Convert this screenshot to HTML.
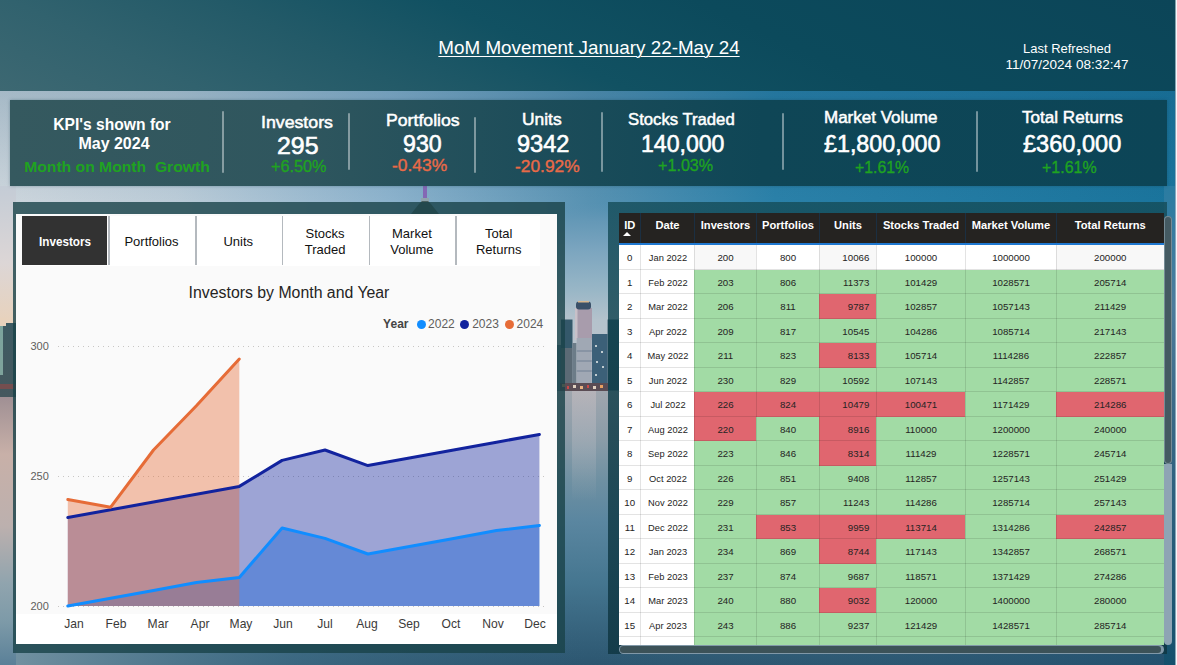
<!DOCTYPE html>
<html lang="en"><head><meta charset="utf-8"><title>MoM Movement January 22-May 24</title>
<style>
html,body{margin:0;padding:0}
body{width:1177px;height:665px;overflow:hidden;position:relative;background:#f4f6fa;font-family:"Liberation Sans",sans-serif}
.t{position:absolute;white-space:pre;margin:0;padding:0}
.a{position:absolute}
#wrap{position:absolute;left:0;top:0;width:1175px;height:665px;overflow:hidden}
</style></head><body><div id="wrap">

<svg class="a" style="left:0;top:0" width="1175" height="665" viewBox="0 0 1175 665">
<defs>
<linearGradient id="sky" x1="0" y1="0" x2="1" y2="0">
<stop offset="0" stop-color="#ccd5dc"/><stop offset="0.15" stop-color="#bacbd7"/><stop offset="0.33" stop-color="#8cb2cc"/><stop offset="0.5" stop-color="#5892b2"/><stop offset="0.66" stop-color="#2a80a8"/><stop offset="1" stop-color="#1a749c"/>
</linearGradient>
<linearGradient id="topd" x1="0" y1="0" x2="0" y2="1"><stop offset="0.4" stop-color="#0c4a70" stop-opacity="0.22"/><stop offset="1" stop-color="#0c4a70" stop-opacity="0"/></linearGradient>
<linearGradient id="rstrip" x1="0" y1="0" x2="0" y2="1"><stop offset="0" stop-color="#2a7ca2"/><stop offset="0.25" stop-color="#4c7c9c"/><stop offset="0.45" stop-color="#3a6a88"/><stop offset="1" stop-color="#14506c"/></linearGradient>
<linearGradient id="hz" x1="0" y1="0" x2="0" y2="1">
<stop offset="0" stop-color="#5c94b4" stop-opacity="0"/><stop offset="0.1" stop-color="#6699b7" stop-opacity="0.9"/><stop offset="0.25" stop-color="#7ba5bf"/><stop offset="0.46" stop-color="#98b6c6"/><stop offset="0.62" stop-color="#b4c2cc"/><stop offset="1" stop-color="#c4c4cc"/>
</linearGradient>
<linearGradient id="refl" x1="0" y1="0" x2="0" y2="1"><stop offset="0" stop-color="#c4bcc0" stop-opacity="0.6"/><stop offset="0.5" stop-color="#b8bcc4" stop-opacity="0.35"/><stop offset="1" stop-color="#b8bcc4" stop-opacity="0"/></linearGradient>
<linearGradient id="water" x1="0" y1="0" x2="0" y2="1">
<stop offset="0" stop-color="#a0a6ae"/><stop offset="0.18" stop-color="#8a9ca8"/><stop offset="0.33" stop-color="#6e90a2"/><stop offset="0.48" stop-color="#5a86a0"/><stop offset="0.7" stop-color="#457690"/><stop offset="1" stop-color="#2c5670"/>
</linearGradient>
<linearGradient id="lstrip" x1="0" y1="0" x2="0" y2="1">
<stop offset="0" stop-color="#c4ccd6"/><stop offset="0.16" stop-color="#dcd6d6"/><stop offset="0.285" stop-color="#e8d2bc"/>
<stop offset="0.286" stop-color="#3d5a62"/><stop offset="0.44" stop-color="#45585e"/>
<stop offset="0.441" stop-color="#a09094"/><stop offset="0.56" stop-color="#c8b0a8"/><stop offset="0.71" stop-color="#bcb0ae"/><stop offset="0.83" stop-color="#90a4ae"/><stop offset="0.91" stop-color="#7d9aa8"/><stop offset="1" stop-color="#5a8098"/>
</linearGradient>
<linearGradient id="lfade" x1="0" y1="0" x2="1" y2="0">
<stop offset="0" stop-color="#7d9aa8" stop-opacity="0.9"/><stop offset="0.25" stop-color="#4a7890" stop-opacity="0.5"/><stop offset="0.5" stop-color="#3a6880" stop-opacity="0"/><stop offset="1" stop-color="#1c4c6c" stop-opacity="0.55"/>
</linearGradient>
</defs>
<rect x="0" y="0" width="1175" height="392" fill="url(#sky)"/>
<rect x="0" y="0" width="1175" height="200" fill="url(#topd)"/>
<rect x="556" y="202" width="64" height="190" fill="url(#hz)"/>
<rect x="0" y="390" width="1175" height="275" fill="url(#water)"/>
<rect x="0" y="600" width="1175" height="65" fill="url(#lfade)"/>
<rect x="1164" y="186" width="11" height="479" fill="url(#rstrip)"/>
<!-- left strip -->
<rect x="0" y="186" width="16" height="479" fill="url(#lstrip)"/>
<rect x="0" y="325" width="3" height="50" fill="#a6d6c4" opacity="0.6"/>
<rect x="0" y="318" width="6" height="8" fill="#e8d2bc"/>
<rect x="0" y="384" width="16" height="5" fill="#8a4a48" opacity="0.7"/>
<!-- centre strip buildings -->
<rect x="561" y="319.5" width="11.5" height="71" fill="#34586a"/>
<rect x="561" y="348" width="11.5" height="36" fill="#7c7a7e" opacity="0.55"/>
<rect x="556" y="345" width="5" height="46" fill="#4a6c7c"/>
<rect x="572.5" y="343" width="4" height="48" fill="#6c7c88"/>
<rect x="575" y="308" width="17" height="32" fill="#a89cac"/>
<rect x="575" y="308" width="2.5" height="32" fill="#c8c0c8"/>
<rect x="576" y="301.5" width="15" height="8" rx="3" fill="#3a5068"/>
<rect x="578" y="301" width="11" height="1.5" fill="#d8b890"/>
<rect x="576.7" y="338" width="15" height="46" fill="#a0a8b4"/>
<rect x="576.7" y="350" width="15" height="2" fill="#8894a4"/><rect x="576.7" y="360" width="15" height="2" fill="#8894a4"/><rect x="576.7" y="370" width="15" height="2" fill="#8894a4"/>
<rect x="592" y="334" width="15.6" height="57" fill="#3c6078"/>
<rect x="595" y="345" width="2" height="2" fill="#c0ccd0"/><rect x="601" y="351" width="2" height="2" fill="#c0ccd0"/><rect x="596" y="361" width="2" height="2" fill="#c0ccd0"/><rect x="602" y="366" width="2" height="2" fill="#c0ccd0"/><rect x="595" y="374" width="2" height="2" fill="#c0ccd0"/>
<rect x="607.6" y="319.5" width="12" height="71" fill="#2a4c5c"/>
<rect x="560" y="383" width="48" height="8" fill="#5a4c54"/>
<rect x="562" y="384" width="3" height="3" fill="#e8a060"/><rect x="567" y="386" width="2" height="3" fill="#c84848"/><rect x="573" y="385" width="3" height="3" fill="#e0d0c0"/><rect x="580" y="386" width="3" height="3" fill="#e8b080"/><rect x="587" y="385" width="2" height="3" fill="#c84848"/><rect x="593" y="386" width="3" height="3" fill="#e0d0c0"/><rect x="600" y="385" width="3" height="3" fill="#e8a060"/>
<rect x="572" y="391" width="24" height="110" fill="url(#refl)"/>
<!-- needle -->
<rect x="423" y="186" width="4" height="12.5" fill="#8468b4"/><rect x="421" y="198" width="8" height="4" fill="#8fa4ac"/>
<path d="M411 214 L419 204 L422 201 L428 201 L431 204 L439 214 Z" fill="#4a6060"/>
</svg>
<div class="a" style="left:0;top:0;width:1175px;height:91px;background:linear-gradient(25deg,#3d6872 0%,#31626e 15%,#235a68 30%,#115162 46%,#0c4a5c 65%,#0c4558 100%)"></div>
<div class="t" style="left:588.5px;top:37.00px;font-size:18.67px;line-height:21.45px;color:#fff;font-weight:400;transform:translateX(-50%) scaleX(1.0089746165695532);text-decoration:underline;text-underline-offset:2px;text-decoration-thickness:1px">MoM Movement January 22-May 24</div>
<div class="t" style="left:1066.5px;top:41.16px;font-size:13.3px;line-height:15.28px;color:#fff;font-weight:400;transform:translateX(-50%) scaleX(0.9758261255267242);">Last Refreshed</div>
<div class="t" style="left:1066.7px;top:57.26px;font-size:13.3px;line-height:15.28px;color:#fff;font-weight:400;transform:translateX(-50%) scaleX(1.0165289256198347);">11/07/2024 08:32:47</div>
<div class="a" style="left:10px;top:100px;width:1157px;height:86px;background:linear-gradient(90deg,#35595f 0%,#2f565e 25%,#1d4d5a 45%,#0f4656 65%,#0c4557 100%);box-shadow:0 0 3px rgba(20,60,80,.35)"></div>
<div class="a" style="left:221.5px;top:111px;width:2px;height:62px;background:rgba(255,255,255,.42);border-radius:1px"></div>
<div class="a" style="left:347.5px;top:113px;width:2px;height:57px;background:rgba(255,255,255,.42);border-radius:1px"></div>
<div class="a" style="left:474.0px;top:117px;width:2px;height:56px;background:rgba(255,255,255,.42);border-radius:1px"></div>
<div class="a" style="left:601.0px;top:112px;width:2px;height:59.5px;background:rgba(255,255,255,.42);border-radius:1px"></div>
<div class="a" style="left:781.5px;top:113px;width:2px;height:57px;background:rgba(255,255,255,.42);border-radius:1px"></div>
<div class="a" style="left:975.5px;top:111px;width:2px;height:61px;background:rgba(255,255,255,.42);border-radius:1px"></div>
<div class="t" style="left:111.6px;top:114.61px;font-size:17px;line-height:19.53px;color:#fff;font-weight:700;transform:translateX(-50%) scaleX(0.9188385379979652);">KPI's shown for</div>
<div class="t" style="left:113.6px;top:133.62px;font-size:17px;line-height:19.53px;color:#fff;font-weight:700;transform:translateX(-50%) scaleX(0.94);">May 2024</div>
<div class="t" style="left:116.6px;top:157.96px;font-size:15.4px;line-height:17.69px;color:#1fa321;font-weight:700;transform:translateX(-50%) scaleX(1.02);">Month on Month  Growth</div>
<div class="t" style="left:261.43px;top:112.78px;font-size:16.6px;line-height:19.07px;color:#fff;font-weight:400;transform-origin:left center;transform:scaleX(1.0682);-webkit-text-stroke:0.5px #fff;">Investors</div>
<div class="t" style="left:276.68px;top:131.92px;font-size:24.4px;line-height:28.04px;color:#fff;font-weight:400;transform-origin:left center;transform:scaleX(1.0205);-webkit-text-stroke:0.6px #fff;">295</div>
<div class="t" style="left:271.30px;top:157.20px;font-size:16.8px;line-height:19.30px;color:#1fa321;font-weight:400;transform-origin:left center;transform:scaleX(0.9684);-webkit-text-stroke:0.35px #1fa321;">+6.50%</div>
<div class="t" style="left:385.74px;top:110.58px;font-size:16.6px;line-height:19.07px;color:#fff;font-weight:400;transform-origin:left center;transform:scaleX(1.0647);-webkit-text-stroke:0.5px #fff;">Portfolios</div>
<div class="t" style="left:403.00px;top:130.32px;font-size:24.4px;line-height:28.04px;color:#fff;font-weight:400;transform-origin:left center;transform:scaleX(0.9512);-webkit-text-stroke:0.6px #fff;">930</div>
<div class="t" style="left:391.70px;top:156.30px;font-size:16.8px;line-height:19.30px;color:#ea6a47;font-weight:400;transform-origin:left center;transform:scaleX(1.0377);-webkit-text-stroke:0.35px #ea6a47;">-0.43%</div>
<div class="t" style="left:522.15px;top:109.78px;font-size:16.6px;line-height:19.07px;color:#fff;font-weight:400;transform-origin:left center;transform:scaleX(1.0486);-webkit-text-stroke:0.5px #fff;">Units</div>
<div class="t" style="left:516.60px;top:129.52px;font-size:24.4px;line-height:28.04px;color:#fff;font-weight:400;transform-origin:left center;transform:scaleX(0.9667);-webkit-text-stroke:0.6px #fff;">9342</div>
<div class="t" style="left:514.80px;top:157.00px;font-size:16.8px;line-height:19.30px;color:#ea6a47;font-weight:400;transform-origin:left center;transform:scaleX(1.0355);-webkit-text-stroke:0.35px #ea6a47;">-20.92%</div>
<div class="t" style="left:628.20px;top:109.98px;font-size:16.6px;line-height:19.07px;color:#fff;font-weight:400;transform-origin:left center;transform:scaleX(1.0057);-webkit-text-stroke:0.5px #fff;">Stocks Traded</div>
<div class="t" style="left:640.55px;top:130.32px;font-size:24.4px;line-height:28.04px;color:#fff;font-weight:400;transform-origin:left center;transform:scaleX(0.9460);-webkit-text-stroke:0.6px #fff;">140,000</div>
<div class="t" style="left:657.60px;top:156.30px;font-size:16.8px;line-height:19.30px;color:#1fa321;font-weight:400;transform-origin:left center;transform:scaleX(0.9614);-webkit-text-stroke:0.35px #1fa321;">+1.03%</div>
<div class="t" style="left:824.48px;top:108.38px;font-size:16.6px;line-height:19.07px;color:#fff;font-weight:400;transform-origin:left center;transform:scaleX(1.0245);-webkit-text-stroke:0.5px #fff;">Market Volume</div>
<div class="t" style="left:823.80px;top:129.82px;font-size:24.4px;line-height:28.04px;color:#fff;font-weight:400;transform-origin:left center;transform:scaleX(0.9541);-webkit-text-stroke:0.6px #fff;">£1,800,000</div>
<div class="t" style="left:855.20px;top:157.50px;font-size:16.8px;line-height:19.30px;color:#1fa321;font-weight:400;transform-origin:left center;transform:scaleX(0.9404);-webkit-text-stroke:0.35px #1fa321;">+1.61%</div>
<div class="t" style="left:1022.20px;top:108.38px;font-size:16.6px;line-height:19.07px;color:#fff;font-weight:400;transform-origin:left center;transform:scaleX(1.0306);-webkit-text-stroke:0.5px #fff;">Total Returns</div>
<div class="t" style="left:1022.90px;top:129.82px;font-size:24.4px;line-height:28.04px;color:#fff;font-weight:400;transform-origin:left center;transform:scaleX(0.9657);-webkit-text-stroke:0.6px #fff;">£360,000</div>
<div class="t" style="left:1042.40px;top:157.50px;font-size:16.8px;line-height:19.30px;color:#1fa321;font-weight:400;transform-origin:left center;transform:scaleX(0.9509);-webkit-text-stroke:0.35px #1fa321;">+1.61%</div>
<div class="a" style="left:13px;top:202px;width:552px;height:451px;background:rgba(25,66,73,.80)"></div>
<div class="a" style="left:16px;top:214px;width:541px;height:430px;background:#fafafa"></div>
<div class="a" style="left:22px;top:215.6px;width:518.4px;height:50px;background:#fff"></div>
<div class="a" style="left:16px;top:614px;width:541px;height:30px;background:#fff"></div>
<div class="a" style="left:22.2px;top:215.7px;width:85px;height:49.6px;background:#323232"></div>
<div class="a" style="left:108.1px;top:215.7px;width:1.7px;height:49.8px;background:#b4b9be"></div>
<div class="t" style="left:64.7px;top:234.83px;font-size:13px;line-height:14.94px;color:#fff;font-weight:700;transform:translateX(-50%) scaleX(0.9);">Investors</div>
<div class="a" style="left:194.9px;top:215.7px;width:1.7px;height:49.8px;background:#b4b9be"></div>
<div class="t" style="left:151.5px;top:234.83px;font-size:13px;line-height:14.94px;color:#111;font-weight:400;transform:translateX(-50%) scaleX(1);">Portfolios</div>
<div class="a" style="left:281.7px;top:215.7px;width:1.7px;height:49.8px;background:#b4b9be"></div>
<div class="t" style="left:238.29999999999998px;top:234.83px;font-size:13px;line-height:14.94px;color:#111;font-weight:400;transform:translateX(-50%) scaleX(1);">Units</div>
<div class="a" style="left:368.5px;top:215.7px;width:1.7px;height:49.8px;background:#b4b9be"></div>
<div class="t" style="left:325.09999999999997px;top:226.74px;font-size:13px;line-height:14.94px;color:#111;font-weight:400;transform:translateX(-50%) scaleX(1.0);">Stocks</div>
<div class="t" style="left:325.09999999999997px;top:242.83px;font-size:13px;line-height:14.94px;color:#111;font-weight:400;transform:translateX(-50%) scaleX(1.0);">Traded</div>
<div class="a" style="left:455.3px;top:215.7px;width:1.7px;height:49.8px;background:#b4b9be"></div>
<div class="t" style="left:411.9px;top:226.74px;font-size:13px;line-height:14.94px;color:#111;font-weight:400;transform:translateX(-50%) scaleX(1.0);">Market</div>
<div class="t" style="left:411.9px;top:242.83px;font-size:13px;line-height:14.94px;color:#111;font-weight:400;transform:translateX(-50%) scaleX(1.0);">Volume</div>
<div class="t" style="left:498.7px;top:226.74px;font-size:13px;line-height:14.94px;color:#111;font-weight:400;transform:translateX(-50%) scaleX(1.0);">Total</div>
<div class="t" style="left:498.7px;top:242.83px;font-size:13px;line-height:14.94px;color:#111;font-weight:400;transform:translateX(-50%) scaleX(1.0);">Returns</div>
<div class="t" style="left:288.8px;top:283.92px;font-size:16px;line-height:18.38px;color:#252423;font-weight:400;transform:translateX(-50%) scaleX(0.99);">Investors by Month and Year</div>
<div class="t" style="left:395.8px;top:317.84px;font-size:12px;line-height:13.79px;color:#444;font-weight:700;transform:translateX(-50%) scaleX(1.0);">Year</div>
<div class="a" style="left:416.5px;top:320.1px;width:9px;height:9px;border-radius:50%;background:#118DFF"></div>
<div class="t" style="left:441.4px;top:317.84px;font-size:12px;line-height:13.79px;color:#605e5c;font-weight:400;transform:translateX(-50%) scaleX(1.0);">2022</div>
<div class="a" style="left:460.4px;top:320.1px;width:9px;height:9px;border-radius:50%;background:#12239E"></div>
<div class="t" style="left:485.5px;top:317.84px;font-size:12px;line-height:13.79px;color:#605e5c;font-weight:400;transform:translateX(-50%) scaleX(1.0);">2023</div>
<div class="a" style="left:504.8px;top:320.1px;width:9px;height:9px;border-radius:50%;background:#E66C37"></div>
<div class="t" style="left:529.9px;top:317.84px;font-size:12px;line-height:13.79px;color:#605e5c;font-weight:400;transform:translateX(-50%) scaleX(1.0);">2024</div>
<svg class="a" style="left:0;top:0" width="1175" height="665" viewBox="0 0 1175 665">
<line x1="58" x2="545" y1="346.5" y2="346.5" stroke="#c8c6c4" stroke-width="1" stroke-dasharray="1 4"/>
<line x1="58" x2="545" y1="476.5" y2="476.5" stroke="#c8c6c4" stroke-width="1" stroke-dasharray="1 4"/>
<line x1="58" x2="545" y1="606.5" y2="606.5" stroke="#c8c6c4" stroke-width="1" stroke-dasharray="1 4"/>
<path d="M67.8 606.0 L110.7 598.2 L153.5 590.4 L196.4 582.6 L239.3 577.4 L282.1 528.0 L325.0 538.4 L367.9 554.0 L410.8 546.2 L453.6 538.4 L496.5 530.6 L539.4 525.4 L539.4 606.0 L67.8 606.0 Z" fill="#118DFF" fill-opacity="0.4"/>
<path d="M67.8 517.6 L110.7 509.8 L153.5 502.0 L196.4 494.2 L239.3 486.4 L282.1 460.4 L325.0 450.0 L367.9 465.6 L410.8 457.8 L453.6 450.0 L496.5 442.2 L539.4 434.4 L539.4 606.0 L67.8 606.0 Z" fill="#12239E" fill-opacity="0.4"/>
<path d="M67.8 499.4 L110.7 507.2 L153.5 450.0 L196.4 405.8 L239.3 359.0 L239.3 606.0 L67.8 606.0 Z" fill="#E66C37" fill-opacity="0.4"/>
<path d="M67.8 606.0 L110.7 598.2 L153.5 590.4 L196.4 582.6 L239.3 577.4 L282.1 528.0 L325.0 538.4 L367.9 554.0 L410.8 546.2 L453.6 538.4 L496.5 530.6 L539.4 525.4" fill="none" stroke="#118DFF" stroke-width="3" stroke-linejoin="round" stroke-linecap="round"/>
<path d="M67.8 517.6 L110.7 509.8 L153.5 502.0 L196.4 494.2 L239.3 486.4 L282.1 460.4 L325.0 450.0 L367.9 465.6 L410.8 457.8 L453.6 450.0 L496.5 442.2 L539.4 434.4" fill="none" stroke="#12239E" stroke-width="3" stroke-linejoin="round" stroke-linecap="round"/>
<path d="M67.8 499.4 L110.7 507.2 L153.5 450.0 L196.4 405.8 L239.3 359.0" fill="none" stroke="#E66C37" stroke-width="3" stroke-linejoin="round" stroke-linecap="round"/>
</svg>
<div class="t" style="left:39.6px;top:339.85px;font-size:11px;line-height:12.64px;color:#605e5c;font-weight:400;transform:translateX(-50%) scaleX(1.0);">300</div>
<div class="t" style="left:39.6px;top:469.85px;font-size:11px;line-height:12.64px;color:#605e5c;font-weight:400;transform:translateX(-50%) scaleX(1.0);">250</div>
<div class="t" style="left:39.6px;top:599.84px;font-size:11px;line-height:12.64px;color:#605e5c;font-weight:400;transform:translateX(-50%) scaleX(1.0);">200</div>
<div class="t" style="left:73.9px;top:617.34px;font-size:13px;line-height:14.94px;color:#3b3a39;font-weight:400;transform:translateX(-50%) scaleX(0.93);">Jan</div>
<div class="t" style="left:115.79px;top:617.34px;font-size:13px;line-height:14.94px;color:#3b3a39;font-weight:400;transform:translateX(-50%) scaleX(0.93);">Feb</div>
<div class="t" style="left:157.68px;top:617.34px;font-size:13px;line-height:14.94px;color:#3b3a39;font-weight:400;transform:translateX(-50%) scaleX(0.93);">Mar</div>
<div class="t" style="left:199.57px;top:617.34px;font-size:13px;line-height:14.94px;color:#3b3a39;font-weight:400;transform:translateX(-50%) scaleX(0.93);">Apr</div>
<div class="t" style="left:241.46px;top:617.34px;font-size:13px;line-height:14.94px;color:#3b3a39;font-weight:400;transform:translateX(-50%) scaleX(0.93);">May</div>
<div class="t" style="left:283.35px;top:617.34px;font-size:13px;line-height:14.94px;color:#3b3a39;font-weight:400;transform:translateX(-50%) scaleX(0.93);">Jun</div>
<div class="t" style="left:325.24px;top:617.34px;font-size:13px;line-height:14.94px;color:#3b3a39;font-weight:400;transform:translateX(-50%) scaleX(0.93);">Jul</div>
<div class="t" style="left:367.13px;top:617.34px;font-size:13px;line-height:14.94px;color:#3b3a39;font-weight:400;transform:translateX(-50%) scaleX(0.93);">Aug</div>
<div class="t" style="left:409.02px;top:617.34px;font-size:13px;line-height:14.94px;color:#3b3a39;font-weight:400;transform:translateX(-50%) scaleX(0.93);">Sep</div>
<div class="t" style="left:450.90999999999997px;top:617.34px;font-size:13px;line-height:14.94px;color:#3b3a39;font-weight:400;transform:translateX(-50%) scaleX(0.93);">Oct</div>
<div class="t" style="left:492.79999999999995px;top:617.34px;font-size:13px;line-height:14.94px;color:#3b3a39;font-weight:400;transform:translateX(-50%) scaleX(0.93);">Nov</div>
<div class="t" style="left:534.69px;top:617.34px;font-size:13px;line-height:14.94px;color:#3b3a39;font-weight:400;transform:translateX(-50%) scaleX(0.93);">Dec</div>
<div class="a" style="left:608px;top:202px;width:559px;height:452px;background:linear-gradient(180deg,rgba(20,76,88,.80),rgba(16,60,72,.82) 50%,rgba(15,54,66,.84))"></div>
<div class="a" style="left:619px;top:213px;width:545px;height:31px;background:#252321"></div>
<div class="a" style="left:640.0px;top:213px;width:1px;height:30px;background:#1b2f42"></div>
<div class="a" style="left:694.0px;top:213px;width:1px;height:30px;background:#1b2f42"></div>
<div class="a" style="left:756.0px;top:213px;width:1px;height:30px;background:#1b2f42"></div>
<div class="a" style="left:819.0px;top:213px;width:1px;height:30px;background:#1b2f42"></div>
<div class="a" style="left:876.0px;top:213px;width:1px;height:30px;background:#1b2f42"></div>
<div class="a" style="left:965.0px;top:213px;width:1px;height:30px;background:#1b2f42"></div>
<div class="a" style="left:1056.0px;top:213px;width:1px;height:30px;background:#1b2f42"></div>
<div class="t" style="left:629.75px;top:218.81px;font-size:11.15px;line-height:12.81px;color:#fff;font-weight:700;transform:translateX(-50%) scaleX(1.0);">ID</div>
<div class="t" style="left:667.5px;top:218.81px;font-size:11.15px;line-height:12.81px;color:#fff;font-weight:700;transform:translateX(-50%) scaleX(1.0);">Date</div>
<div class="t" style="left:725.5px;top:218.81px;font-size:11.15px;line-height:12.81px;color:#fff;font-weight:700;transform:translateX(-50%) scaleX(1.0);">Investors</div>
<div class="t" style="left:788.0px;top:218.81px;font-size:11.15px;line-height:12.81px;color:#fff;font-weight:700;transform:translateX(-50%) scaleX(1.0);">Portfolios</div>
<div class="t" style="left:848.0px;top:218.81px;font-size:11.15px;line-height:12.81px;color:#fff;font-weight:700;transform:translateX(-50%) scaleX(1.0);">Units</div>
<div class="t" style="left:921.0px;top:218.81px;font-size:11.15px;line-height:12.81px;color:#fff;font-weight:700;transform:translateX(-50%) scaleX(1.0);">Stocks Traded</div>
<div class="t" style="left:1011.0px;top:218.81px;font-size:11.15px;line-height:12.81px;color:#fff;font-weight:700;transform:translateX(-50%) scaleX(1.0);">Market Volume</div>
<div class="t" style="left:1110.25px;top:218.81px;font-size:11.15px;line-height:12.81px;color:#fff;font-weight:700;transform:translateX(-50%) scaleX(1.0);">Total Returns</div>
<div class="a" style="left:623px;top:231.8px;width:0;height:0;border-left:4.5px solid transparent;border-right:4.5px solid transparent;border-bottom:4.5px solid #fff"></div>
<div class="a" style="left:619px;top:244px;width:545px;height:400.5px;background:#fff;overflow:hidden">
<div class="a" style="left:75.0px;top:1px;width:62.0px;height:25px;background:#f8f8f8"></div>
<div class="a" style="left:200.0px;top:1px;width:57.0px;height:25px;background:#f8f8f8"></div>
<div class="a" style="left:437.0px;top:1px;width:107.5px;height:25px;background:#f8f8f8"></div>
<div class="a" style="left:0;top:25px;width:545px;height:1px;background:rgba(0,0,0,.11)"></div>
<div class="a" style="left:75.0px;top:26px;width:62.0px;height:24px;background:#a2dba5"></div>
<div class="a" style="left:137.0px;top:26px;width:63.0px;height:24px;background:#a2dba5"></div>
<div class="a" style="left:200.0px;top:26px;width:57.0px;height:24px;background:#a2dba5"></div>
<div class="a" style="left:257.0px;top:26px;width:89.0px;height:24px;background:#a2dba5"></div>
<div class="a" style="left:346.0px;top:26px;width:91.0px;height:24px;background:#a2dba5"></div>
<div class="a" style="left:437.0px;top:26px;width:107.5px;height:24px;background:#a2dba5"></div>
<div class="a" style="left:0;top:49px;width:545px;height:1px;background:rgba(0,0,0,.11)"></div>
<div class="a" style="left:75.0px;top:50px;width:62.0px;height:25px;background:#a2dba5"></div>
<div class="a" style="left:137.0px;top:50px;width:63.0px;height:25px;background:#a2dba5"></div>
<div class="a" style="left:200.0px;top:50px;width:57.0px;height:25px;background:#e0666f"></div>
<div class="a" style="left:257.0px;top:50px;width:89.0px;height:25px;background:#a2dba5"></div>
<div class="a" style="left:346.0px;top:50px;width:91.0px;height:25px;background:#a2dba5"></div>
<div class="a" style="left:437.0px;top:50px;width:107.5px;height:25px;background:#a2dba5"></div>
<div class="a" style="left:0;top:74px;width:545px;height:1px;background:rgba(0,0,0,.11)"></div>
<div class="a" style="left:75.0px;top:75px;width:62.0px;height:24px;background:#a2dba5"></div>
<div class="a" style="left:137.0px;top:75px;width:63.0px;height:24px;background:#a2dba5"></div>
<div class="a" style="left:200.0px;top:75px;width:57.0px;height:24px;background:#a2dba5"></div>
<div class="a" style="left:257.0px;top:75px;width:89.0px;height:24px;background:#a2dba5"></div>
<div class="a" style="left:346.0px;top:75px;width:91.0px;height:24px;background:#a2dba5"></div>
<div class="a" style="left:437.0px;top:75px;width:107.5px;height:24px;background:#a2dba5"></div>
<div class="a" style="left:0;top:98px;width:545px;height:1px;background:rgba(0,0,0,.11)"></div>
<div class="a" style="left:75.0px;top:99px;width:62.0px;height:25px;background:#a2dba5"></div>
<div class="a" style="left:137.0px;top:99px;width:63.0px;height:25px;background:#a2dba5"></div>
<div class="a" style="left:200.0px;top:99px;width:57.0px;height:25px;background:#e0666f"></div>
<div class="a" style="left:257.0px;top:99px;width:89.0px;height:25px;background:#a2dba5"></div>
<div class="a" style="left:346.0px;top:99px;width:91.0px;height:25px;background:#a2dba5"></div>
<div class="a" style="left:437.0px;top:99px;width:107.5px;height:25px;background:#a2dba5"></div>
<div class="a" style="left:0;top:123px;width:545px;height:1px;background:rgba(0,0,0,.11)"></div>
<div class="a" style="left:75.0px;top:124px;width:62.0px;height:24px;background:#a2dba5"></div>
<div class="a" style="left:137.0px;top:124px;width:63.0px;height:24px;background:#a2dba5"></div>
<div class="a" style="left:200.0px;top:124px;width:57.0px;height:24px;background:#a2dba5"></div>
<div class="a" style="left:257.0px;top:124px;width:89.0px;height:24px;background:#a2dba5"></div>
<div class="a" style="left:346.0px;top:124px;width:91.0px;height:24px;background:#a2dba5"></div>
<div class="a" style="left:437.0px;top:124px;width:107.5px;height:24px;background:#a2dba5"></div>
<div class="a" style="left:0;top:147px;width:545px;height:1px;background:rgba(0,0,0,.11)"></div>
<div class="a" style="left:75.0px;top:148px;width:62.0px;height:25px;background:#e0666f"></div>
<div class="a" style="left:137.0px;top:148px;width:63.0px;height:25px;background:#e0666f"></div>
<div class="a" style="left:200.0px;top:148px;width:57.0px;height:25px;background:#e0666f"></div>
<div class="a" style="left:257.0px;top:148px;width:89.0px;height:25px;background:#e0666f"></div>
<div class="a" style="left:346.0px;top:148px;width:91.0px;height:25px;background:#a2dba5"></div>
<div class="a" style="left:437.0px;top:148px;width:107.5px;height:25px;background:#e0666f"></div>
<div class="a" style="left:0;top:172px;width:545px;height:1px;background:rgba(0,0,0,.11)"></div>
<div class="a" style="left:75.0px;top:173px;width:62.0px;height:24px;background:#e0666f"></div>
<div class="a" style="left:137.0px;top:173px;width:63.0px;height:24px;background:#a2dba5"></div>
<div class="a" style="left:200.0px;top:173px;width:57.0px;height:24px;background:#e0666f"></div>
<div class="a" style="left:257.0px;top:173px;width:89.0px;height:24px;background:#a2dba5"></div>
<div class="a" style="left:346.0px;top:173px;width:91.0px;height:24px;background:#a2dba5"></div>
<div class="a" style="left:437.0px;top:173px;width:107.5px;height:24px;background:#a2dba5"></div>
<div class="a" style="left:0;top:196px;width:545px;height:1px;background:rgba(0,0,0,.11)"></div>
<div class="a" style="left:75.0px;top:197px;width:62.0px;height:25px;background:#a2dba5"></div>
<div class="a" style="left:137.0px;top:197px;width:63.0px;height:25px;background:#a2dba5"></div>
<div class="a" style="left:200.0px;top:197px;width:57.0px;height:25px;background:#e0666f"></div>
<div class="a" style="left:257.0px;top:197px;width:89.0px;height:25px;background:#a2dba5"></div>
<div class="a" style="left:346.0px;top:197px;width:91.0px;height:25px;background:#a2dba5"></div>
<div class="a" style="left:437.0px;top:197px;width:107.5px;height:25px;background:#a2dba5"></div>
<div class="a" style="left:0;top:221px;width:545px;height:1px;background:rgba(0,0,0,.11)"></div>
<div class="a" style="left:75.0px;top:222px;width:62.0px;height:24px;background:#a2dba5"></div>
<div class="a" style="left:137.0px;top:222px;width:63.0px;height:24px;background:#a2dba5"></div>
<div class="a" style="left:200.0px;top:222px;width:57.0px;height:24px;background:#a2dba5"></div>
<div class="a" style="left:257.0px;top:222px;width:89.0px;height:24px;background:#a2dba5"></div>
<div class="a" style="left:346.0px;top:222px;width:91.0px;height:24px;background:#a2dba5"></div>
<div class="a" style="left:437.0px;top:222px;width:107.5px;height:24px;background:#a2dba5"></div>
<div class="a" style="left:0;top:245px;width:545px;height:1px;background:rgba(0,0,0,.11)"></div>
<div class="a" style="left:75.0px;top:246px;width:62.0px;height:25px;background:#a2dba5"></div>
<div class="a" style="left:137.0px;top:246px;width:63.0px;height:25px;background:#a2dba5"></div>
<div class="a" style="left:200.0px;top:246px;width:57.0px;height:25px;background:#a2dba5"></div>
<div class="a" style="left:257.0px;top:246px;width:89.0px;height:25px;background:#a2dba5"></div>
<div class="a" style="left:346.0px;top:246px;width:91.0px;height:25px;background:#a2dba5"></div>
<div class="a" style="left:437.0px;top:246px;width:107.5px;height:25px;background:#a2dba5"></div>
<div class="a" style="left:0;top:270px;width:545px;height:1px;background:rgba(0,0,0,.11)"></div>
<div class="a" style="left:75.0px;top:271px;width:62.0px;height:24px;background:#a2dba5"></div>
<div class="a" style="left:137.0px;top:271px;width:63.0px;height:24px;background:#e0666f"></div>
<div class="a" style="left:200.0px;top:271px;width:57.0px;height:24px;background:#e0666f"></div>
<div class="a" style="left:257.0px;top:271px;width:89.0px;height:24px;background:#e0666f"></div>
<div class="a" style="left:346.0px;top:271px;width:91.0px;height:24px;background:#a2dba5"></div>
<div class="a" style="left:437.0px;top:271px;width:107.5px;height:24px;background:#e0666f"></div>
<div class="a" style="left:0;top:294px;width:545px;height:1px;background:rgba(0,0,0,.11)"></div>
<div class="a" style="left:75.0px;top:295px;width:62.0px;height:25px;background:#a2dba5"></div>
<div class="a" style="left:137.0px;top:295px;width:63.0px;height:25px;background:#a2dba5"></div>
<div class="a" style="left:200.0px;top:295px;width:57.0px;height:25px;background:#e0666f"></div>
<div class="a" style="left:257.0px;top:295px;width:89.0px;height:25px;background:#a2dba5"></div>
<div class="a" style="left:346.0px;top:295px;width:91.0px;height:25px;background:#a2dba5"></div>
<div class="a" style="left:437.0px;top:295px;width:107.5px;height:25px;background:#a2dba5"></div>
<div class="a" style="left:0;top:319px;width:545px;height:1px;background:rgba(0,0,0,.11)"></div>
<div class="a" style="left:75.0px;top:320px;width:62.0px;height:24px;background:#a2dba5"></div>
<div class="a" style="left:137.0px;top:320px;width:63.0px;height:24px;background:#a2dba5"></div>
<div class="a" style="left:200.0px;top:320px;width:57.0px;height:24px;background:#a2dba5"></div>
<div class="a" style="left:257.0px;top:320px;width:89.0px;height:24px;background:#a2dba5"></div>
<div class="a" style="left:346.0px;top:320px;width:91.0px;height:24px;background:#a2dba5"></div>
<div class="a" style="left:437.0px;top:320px;width:107.5px;height:24px;background:#a2dba5"></div>
<div class="a" style="left:0;top:343px;width:545px;height:1px;background:rgba(0,0,0,.11)"></div>
<div class="a" style="left:75.0px;top:344px;width:62.0px;height:25px;background:#a2dba5"></div>
<div class="a" style="left:137.0px;top:344px;width:63.0px;height:25px;background:#a2dba5"></div>
<div class="a" style="left:200.0px;top:344px;width:57.0px;height:25px;background:#e0666f"></div>
<div class="a" style="left:257.0px;top:344px;width:89.0px;height:25px;background:#a2dba5"></div>
<div class="a" style="left:346.0px;top:344px;width:91.0px;height:25px;background:#a2dba5"></div>
<div class="a" style="left:437.0px;top:344px;width:107.5px;height:25px;background:#a2dba5"></div>
<div class="a" style="left:0;top:368px;width:545px;height:1px;background:rgba(0,0,0,.11)"></div>
<div class="a" style="left:75.0px;top:369px;width:62.0px;height:24px;background:#a2dba5"></div>
<div class="a" style="left:137.0px;top:369px;width:63.0px;height:24px;background:#a2dba5"></div>
<div class="a" style="left:200.0px;top:369px;width:57.0px;height:24px;background:#a2dba5"></div>
<div class="a" style="left:257.0px;top:369px;width:89.0px;height:24px;background:#a2dba5"></div>
<div class="a" style="left:346.0px;top:369px;width:91.0px;height:24px;background:#a2dba5"></div>
<div class="a" style="left:437.0px;top:369px;width:107.5px;height:24px;background:#a2dba5"></div>
<div class="a" style="left:0;top:392px;width:545px;height:1px;background:rgba(0,0,0,.11)"></div>
<div class="a" style="left:75.0px;top:393px;width:62.0px;height:25px;background:#a2dba5"></div>
<div class="a" style="left:137.0px;top:393px;width:63.0px;height:25px;background:#a2dba5"></div>
<div class="a" style="left:200.0px;top:393px;width:57.0px;height:25px;background:#a2dba5"></div>
<div class="a" style="left:257.0px;top:393px;width:89.0px;height:25px;background:#a2dba5"></div>
<div class="a" style="left:346.0px;top:393px;width:91.0px;height:25px;background:#a2dba5"></div>
<div class="a" style="left:437.0px;top:393px;width:107.5px;height:25px;background:#a2dba5"></div>
<div class="a" style="left:0;top:417px;width:545px;height:1px;background:rgba(0,0,0,.11)"></div>
<div class="a" style="left:21.0px;top:0;width:1px;height:401px;background:rgba(0,0,0,.11)"></div>
<div class="a" style="left:75.0px;top:0;width:1px;height:401px;background:rgba(0,0,0,.11)"></div>
<div class="a" style="left:137.0px;top:0;width:1px;height:401px;background:rgba(0,0,0,.11)"></div>
<div class="a" style="left:200.0px;top:0;width:1px;height:401px;background:rgba(0,0,0,.11)"></div>
<div class="a" style="left:257.0px;top:0;width:1px;height:401px;background:rgba(0,0,0,.11)"></div>
<div class="a" style="left:346.0px;top:0;width:1px;height:401px;background:rgba(0,0,0,.11)"></div>
<div class="a" style="left:437.0px;top:0;width:1px;height:401px;background:rgba(0,0,0,.11)"></div>
</div>
<div class="t" style="left:629.75px;top:252.17px;font-size:9.7px;line-height:11.15px;color:#252423;font-weight:400;transform:translateX(-50%) scaleX(1.0);">0</div>
<div class="t" style="left:667.5px;top:252.17px;font-size:9.7px;line-height:11.15px;color:#252423;font-weight:400;transform:translateX(-50%) scaleX(0.96);">Jan 2022</div>
<div class="t" style="left:725.5px;top:252.17px;font-size:9.7px;line-height:11.15px;color:#252423;font-weight:400;transform:translateX(-50%) scaleX(1.0);">200</div>
<div class="t" style="left:788.0px;top:252.17px;font-size:9.7px;line-height:11.15px;color:#252423;font-weight:400;transform:translateX(-50%) scaleX(1.0);">800</div>
<div class="t" style="right:305.70000000000005px;transform-origin:right center;top:252.17px;font-size:9.7px;line-height:11.15px;color:#252423;font-weight:400;transform:scaleX(1.0);">10066</div>
<div class="t" style="left:921.0px;top:252.17px;font-size:9.7px;line-height:11.15px;color:#252423;font-weight:400;transform:translateX(-50%) scaleX(1.0);">100000</div>
<div class="t" style="left:1011.0px;top:252.17px;font-size:9.7px;line-height:11.15px;color:#252423;font-weight:400;transform:translateX(-50%) scaleX(1.0);">1000000</div>
<div class="t" style="left:1110.25px;top:252.17px;font-size:9.7px;line-height:11.15px;color:#252423;font-weight:400;transform:translateX(-50%) scaleX(1.0);">200000</div>
<div class="t" style="left:629.75px;top:276.67px;font-size:9.7px;line-height:11.15px;color:#252423;font-weight:400;transform:translateX(-50%) scaleX(1.0);">1</div>
<div class="t" style="left:667.5px;top:276.67px;font-size:9.7px;line-height:11.15px;color:#252423;font-weight:400;transform:translateX(-50%) scaleX(0.96);">Feb 2022</div>
<div class="t" style="left:725.5px;top:276.67px;font-size:9.7px;line-height:11.15px;color:#252423;font-weight:400;transform:translateX(-50%) scaleX(1.0);">203</div>
<div class="t" style="left:788.0px;top:276.67px;font-size:9.7px;line-height:11.15px;color:#252423;font-weight:400;transform:translateX(-50%) scaleX(1.0);">806</div>
<div class="t" style="right:305.70000000000005px;transform-origin:right center;top:276.67px;font-size:9.7px;line-height:11.15px;color:#252423;font-weight:400;transform:scaleX(1.0);">11373</div>
<div class="t" style="left:921.0px;top:276.67px;font-size:9.7px;line-height:11.15px;color:#252423;font-weight:400;transform:translateX(-50%) scaleX(1.0);">101429</div>
<div class="t" style="left:1011.0px;top:276.67px;font-size:9.7px;line-height:11.15px;color:#252423;font-weight:400;transform:translateX(-50%) scaleX(1.0);">1028571</div>
<div class="t" style="left:1110.25px;top:276.67px;font-size:9.7px;line-height:11.15px;color:#252423;font-weight:400;transform:translateX(-50%) scaleX(1.0);">205714</div>
<div class="t" style="left:629.75px;top:301.17px;font-size:9.7px;line-height:11.15px;color:#252423;font-weight:400;transform:translateX(-50%) scaleX(1.0);">2</div>
<div class="t" style="left:667.5px;top:301.17px;font-size:9.7px;line-height:11.15px;color:#252423;font-weight:400;transform:translateX(-50%) scaleX(0.96);">Mar 2022</div>
<div class="t" style="left:725.5px;top:301.17px;font-size:9.7px;line-height:11.15px;color:#252423;font-weight:400;transform:translateX(-50%) scaleX(1.0);">206</div>
<div class="t" style="left:788.0px;top:301.17px;font-size:9.7px;line-height:11.15px;color:#252423;font-weight:400;transform:translateX(-50%) scaleX(1.0);">811</div>
<div class="t" style="right:305.70000000000005px;transform-origin:right center;top:301.17px;font-size:9.7px;line-height:11.15px;color:#252423;font-weight:400;transform:scaleX(1.0);">9787</div>
<div class="t" style="left:921.0px;top:301.17px;font-size:9.7px;line-height:11.15px;color:#252423;font-weight:400;transform:translateX(-50%) scaleX(1.0);">102857</div>
<div class="t" style="left:1011.0px;top:301.17px;font-size:9.7px;line-height:11.15px;color:#252423;font-weight:400;transform:translateX(-50%) scaleX(1.0);">1057143</div>
<div class="t" style="left:1110.25px;top:301.17px;font-size:9.7px;line-height:11.15px;color:#252423;font-weight:400;transform:translateX(-50%) scaleX(1.0);">211429</div>
<div class="t" style="left:629.75px;top:325.67px;font-size:9.7px;line-height:11.15px;color:#252423;font-weight:400;transform:translateX(-50%) scaleX(1.0);">3</div>
<div class="t" style="left:667.5px;top:325.67px;font-size:9.7px;line-height:11.15px;color:#252423;font-weight:400;transform:translateX(-50%) scaleX(0.96);">Apr 2022</div>
<div class="t" style="left:725.5px;top:325.67px;font-size:9.7px;line-height:11.15px;color:#252423;font-weight:400;transform:translateX(-50%) scaleX(1.0);">209</div>
<div class="t" style="left:788.0px;top:325.67px;font-size:9.7px;line-height:11.15px;color:#252423;font-weight:400;transform:translateX(-50%) scaleX(1.0);">817</div>
<div class="t" style="right:305.70000000000005px;transform-origin:right center;top:325.67px;font-size:9.7px;line-height:11.15px;color:#252423;font-weight:400;transform:scaleX(1.0);">10545</div>
<div class="t" style="left:921.0px;top:325.67px;font-size:9.7px;line-height:11.15px;color:#252423;font-weight:400;transform:translateX(-50%) scaleX(1.0);">104286</div>
<div class="t" style="left:1011.0px;top:325.67px;font-size:9.7px;line-height:11.15px;color:#252423;font-weight:400;transform:translateX(-50%) scaleX(1.0);">1085714</div>
<div class="t" style="left:1110.25px;top:325.67px;font-size:9.7px;line-height:11.15px;color:#252423;font-weight:400;transform:translateX(-50%) scaleX(1.0);">217143</div>
<div class="t" style="left:629.75px;top:350.17px;font-size:9.7px;line-height:11.15px;color:#252423;font-weight:400;transform:translateX(-50%) scaleX(1.0);">4</div>
<div class="t" style="left:667.5px;top:350.17px;font-size:9.7px;line-height:11.15px;color:#252423;font-weight:400;transform:translateX(-50%) scaleX(0.96);">May 2022</div>
<div class="t" style="left:725.5px;top:350.17px;font-size:9.7px;line-height:11.15px;color:#252423;font-weight:400;transform:translateX(-50%) scaleX(1.0);">211</div>
<div class="t" style="left:788.0px;top:350.17px;font-size:9.7px;line-height:11.15px;color:#252423;font-weight:400;transform:translateX(-50%) scaleX(1.0);">823</div>
<div class="t" style="right:305.70000000000005px;transform-origin:right center;top:350.17px;font-size:9.7px;line-height:11.15px;color:#252423;font-weight:400;transform:scaleX(1.0);">8133</div>
<div class="t" style="left:921.0px;top:350.17px;font-size:9.7px;line-height:11.15px;color:#252423;font-weight:400;transform:translateX(-50%) scaleX(1.0);">105714</div>
<div class="t" style="left:1011.0px;top:350.17px;font-size:9.7px;line-height:11.15px;color:#252423;font-weight:400;transform:translateX(-50%) scaleX(1.0);">1114286</div>
<div class="t" style="left:1110.25px;top:350.17px;font-size:9.7px;line-height:11.15px;color:#252423;font-weight:400;transform:translateX(-50%) scaleX(1.0);">222857</div>
<div class="t" style="left:629.75px;top:374.67px;font-size:9.7px;line-height:11.15px;color:#252423;font-weight:400;transform:translateX(-50%) scaleX(1.0);">5</div>
<div class="t" style="left:667.5px;top:374.67px;font-size:9.7px;line-height:11.15px;color:#252423;font-weight:400;transform:translateX(-50%) scaleX(0.96);">Jun 2022</div>
<div class="t" style="left:725.5px;top:374.67px;font-size:9.7px;line-height:11.15px;color:#252423;font-weight:400;transform:translateX(-50%) scaleX(1.0);">230</div>
<div class="t" style="left:788.0px;top:374.67px;font-size:9.7px;line-height:11.15px;color:#252423;font-weight:400;transform:translateX(-50%) scaleX(1.0);">829</div>
<div class="t" style="right:305.70000000000005px;transform-origin:right center;top:374.67px;font-size:9.7px;line-height:11.15px;color:#252423;font-weight:400;transform:scaleX(1.0);">10592</div>
<div class="t" style="left:921.0px;top:374.67px;font-size:9.7px;line-height:11.15px;color:#252423;font-weight:400;transform:translateX(-50%) scaleX(1.0);">107143</div>
<div class="t" style="left:1011.0px;top:374.67px;font-size:9.7px;line-height:11.15px;color:#252423;font-weight:400;transform:translateX(-50%) scaleX(1.0);">1142857</div>
<div class="t" style="left:1110.25px;top:374.67px;font-size:9.7px;line-height:11.15px;color:#252423;font-weight:400;transform:translateX(-50%) scaleX(1.0);">228571</div>
<div class="t" style="left:629.75px;top:399.17px;font-size:9.7px;line-height:11.15px;color:#252423;font-weight:400;transform:translateX(-50%) scaleX(1.0);">6</div>
<div class="t" style="left:667.5px;top:399.17px;font-size:9.7px;line-height:11.15px;color:#252423;font-weight:400;transform:translateX(-50%) scaleX(0.96);">Jul 2022</div>
<div class="t" style="left:725.5px;top:399.17px;font-size:9.7px;line-height:11.15px;color:#252423;font-weight:400;transform:translateX(-50%) scaleX(1.0);">226</div>
<div class="t" style="left:788.0px;top:399.17px;font-size:9.7px;line-height:11.15px;color:#252423;font-weight:400;transform:translateX(-50%) scaleX(1.0);">824</div>
<div class="t" style="right:305.70000000000005px;transform-origin:right center;top:399.17px;font-size:9.7px;line-height:11.15px;color:#252423;font-weight:400;transform:scaleX(1.0);">10479</div>
<div class="t" style="left:921.0px;top:399.17px;font-size:9.7px;line-height:11.15px;color:#252423;font-weight:400;transform:translateX(-50%) scaleX(1.0);">100471</div>
<div class="t" style="left:1011.0px;top:399.17px;font-size:9.7px;line-height:11.15px;color:#252423;font-weight:400;transform:translateX(-50%) scaleX(1.0);">1171429</div>
<div class="t" style="left:1110.25px;top:399.17px;font-size:9.7px;line-height:11.15px;color:#252423;font-weight:400;transform:translateX(-50%) scaleX(1.0);">214286</div>
<div class="t" style="left:629.75px;top:423.67px;font-size:9.7px;line-height:11.15px;color:#252423;font-weight:400;transform:translateX(-50%) scaleX(1.0);">7</div>
<div class="t" style="left:667.5px;top:423.67px;font-size:9.7px;line-height:11.15px;color:#252423;font-weight:400;transform:translateX(-50%) scaleX(0.96);">Aug 2022</div>
<div class="t" style="left:725.5px;top:423.67px;font-size:9.7px;line-height:11.15px;color:#252423;font-weight:400;transform:translateX(-50%) scaleX(1.0);">220</div>
<div class="t" style="left:788.0px;top:423.67px;font-size:9.7px;line-height:11.15px;color:#252423;font-weight:400;transform:translateX(-50%) scaleX(1.0);">840</div>
<div class="t" style="right:305.70000000000005px;transform-origin:right center;top:423.67px;font-size:9.7px;line-height:11.15px;color:#252423;font-weight:400;transform:scaleX(1.0);">8916</div>
<div class="t" style="left:921.0px;top:423.67px;font-size:9.7px;line-height:11.15px;color:#252423;font-weight:400;transform:translateX(-50%) scaleX(1.0);">110000</div>
<div class="t" style="left:1011.0px;top:423.67px;font-size:9.7px;line-height:11.15px;color:#252423;font-weight:400;transform:translateX(-50%) scaleX(1.0);">1200000</div>
<div class="t" style="left:1110.25px;top:423.67px;font-size:9.7px;line-height:11.15px;color:#252423;font-weight:400;transform:translateX(-50%) scaleX(1.0);">240000</div>
<div class="t" style="left:629.75px;top:448.17px;font-size:9.7px;line-height:11.15px;color:#252423;font-weight:400;transform:translateX(-50%) scaleX(1.0);">8</div>
<div class="t" style="left:667.5px;top:448.17px;font-size:9.7px;line-height:11.15px;color:#252423;font-weight:400;transform:translateX(-50%) scaleX(0.96);">Sep 2022</div>
<div class="t" style="left:725.5px;top:448.17px;font-size:9.7px;line-height:11.15px;color:#252423;font-weight:400;transform:translateX(-50%) scaleX(1.0);">223</div>
<div class="t" style="left:788.0px;top:448.17px;font-size:9.7px;line-height:11.15px;color:#252423;font-weight:400;transform:translateX(-50%) scaleX(1.0);">846</div>
<div class="t" style="right:305.70000000000005px;transform-origin:right center;top:448.17px;font-size:9.7px;line-height:11.15px;color:#252423;font-weight:400;transform:scaleX(1.0);">8314</div>
<div class="t" style="left:921.0px;top:448.17px;font-size:9.7px;line-height:11.15px;color:#252423;font-weight:400;transform:translateX(-50%) scaleX(1.0);">111429</div>
<div class="t" style="left:1011.0px;top:448.17px;font-size:9.7px;line-height:11.15px;color:#252423;font-weight:400;transform:translateX(-50%) scaleX(1.0);">1228571</div>
<div class="t" style="left:1110.25px;top:448.17px;font-size:9.7px;line-height:11.15px;color:#252423;font-weight:400;transform:translateX(-50%) scaleX(1.0);">245714</div>
<div class="t" style="left:629.75px;top:472.67px;font-size:9.7px;line-height:11.15px;color:#252423;font-weight:400;transform:translateX(-50%) scaleX(1.0);">9</div>
<div class="t" style="left:667.5px;top:472.67px;font-size:9.7px;line-height:11.15px;color:#252423;font-weight:400;transform:translateX(-50%) scaleX(0.96);">Oct 2022</div>
<div class="t" style="left:725.5px;top:472.67px;font-size:9.7px;line-height:11.15px;color:#252423;font-weight:400;transform:translateX(-50%) scaleX(1.0);">226</div>
<div class="t" style="left:788.0px;top:472.67px;font-size:9.7px;line-height:11.15px;color:#252423;font-weight:400;transform:translateX(-50%) scaleX(1.0);">851</div>
<div class="t" style="right:305.70000000000005px;transform-origin:right center;top:472.67px;font-size:9.7px;line-height:11.15px;color:#252423;font-weight:400;transform:scaleX(1.0);">9408</div>
<div class="t" style="left:921.0px;top:472.67px;font-size:9.7px;line-height:11.15px;color:#252423;font-weight:400;transform:translateX(-50%) scaleX(1.0);">112857</div>
<div class="t" style="left:1011.0px;top:472.67px;font-size:9.7px;line-height:11.15px;color:#252423;font-weight:400;transform:translateX(-50%) scaleX(1.0);">1257143</div>
<div class="t" style="left:1110.25px;top:472.67px;font-size:9.7px;line-height:11.15px;color:#252423;font-weight:400;transform:translateX(-50%) scaleX(1.0);">251429</div>
<div class="t" style="left:629.75px;top:497.17px;font-size:9.7px;line-height:11.15px;color:#252423;font-weight:400;transform:translateX(-50%) scaleX(1.0);">10</div>
<div class="t" style="left:667.5px;top:497.17px;font-size:9.7px;line-height:11.15px;color:#252423;font-weight:400;transform:translateX(-50%) scaleX(0.96);">Nov 2022</div>
<div class="t" style="left:725.5px;top:497.17px;font-size:9.7px;line-height:11.15px;color:#252423;font-weight:400;transform:translateX(-50%) scaleX(1.0);">229</div>
<div class="t" style="left:788.0px;top:497.17px;font-size:9.7px;line-height:11.15px;color:#252423;font-weight:400;transform:translateX(-50%) scaleX(1.0);">857</div>
<div class="t" style="right:305.70000000000005px;transform-origin:right center;top:497.17px;font-size:9.7px;line-height:11.15px;color:#252423;font-weight:400;transform:scaleX(1.0);">11243</div>
<div class="t" style="left:921.0px;top:497.17px;font-size:9.7px;line-height:11.15px;color:#252423;font-weight:400;transform:translateX(-50%) scaleX(1.0);">114286</div>
<div class="t" style="left:1011.0px;top:497.17px;font-size:9.7px;line-height:11.15px;color:#252423;font-weight:400;transform:translateX(-50%) scaleX(1.0);">1285714</div>
<div class="t" style="left:1110.25px;top:497.17px;font-size:9.7px;line-height:11.15px;color:#252423;font-weight:400;transform:translateX(-50%) scaleX(1.0);">257143</div>
<div class="t" style="left:629.75px;top:521.67px;font-size:9.7px;line-height:11.15px;color:#252423;font-weight:400;transform:translateX(-50%) scaleX(1.0);">11</div>
<div class="t" style="left:667.5px;top:521.67px;font-size:9.7px;line-height:11.15px;color:#252423;font-weight:400;transform:translateX(-50%) scaleX(0.96);">Dec 2022</div>
<div class="t" style="left:725.5px;top:521.67px;font-size:9.7px;line-height:11.15px;color:#252423;font-weight:400;transform:translateX(-50%) scaleX(1.0);">231</div>
<div class="t" style="left:788.0px;top:521.67px;font-size:9.7px;line-height:11.15px;color:#252423;font-weight:400;transform:translateX(-50%) scaleX(1.0);">853</div>
<div class="t" style="right:305.70000000000005px;transform-origin:right center;top:521.67px;font-size:9.7px;line-height:11.15px;color:#252423;font-weight:400;transform:scaleX(1.0);">9959</div>
<div class="t" style="left:921.0px;top:521.67px;font-size:9.7px;line-height:11.15px;color:#252423;font-weight:400;transform:translateX(-50%) scaleX(1.0);">113714</div>
<div class="t" style="left:1011.0px;top:521.67px;font-size:9.7px;line-height:11.15px;color:#252423;font-weight:400;transform:translateX(-50%) scaleX(1.0);">1314286</div>
<div class="t" style="left:1110.25px;top:521.67px;font-size:9.7px;line-height:11.15px;color:#252423;font-weight:400;transform:translateX(-50%) scaleX(1.0);">242857</div>
<div class="t" style="left:629.75px;top:546.17px;font-size:9.7px;line-height:11.15px;color:#252423;font-weight:400;transform:translateX(-50%) scaleX(1.0);">12</div>
<div class="t" style="left:667.5px;top:546.17px;font-size:9.7px;line-height:11.15px;color:#252423;font-weight:400;transform:translateX(-50%) scaleX(0.96);">Jan 2023</div>
<div class="t" style="left:725.5px;top:546.17px;font-size:9.7px;line-height:11.15px;color:#252423;font-weight:400;transform:translateX(-50%) scaleX(1.0);">234</div>
<div class="t" style="left:788.0px;top:546.17px;font-size:9.7px;line-height:11.15px;color:#252423;font-weight:400;transform:translateX(-50%) scaleX(1.0);">869</div>
<div class="t" style="right:305.70000000000005px;transform-origin:right center;top:546.17px;font-size:9.7px;line-height:11.15px;color:#252423;font-weight:400;transform:scaleX(1.0);">8744</div>
<div class="t" style="left:921.0px;top:546.17px;font-size:9.7px;line-height:11.15px;color:#252423;font-weight:400;transform:translateX(-50%) scaleX(1.0);">117143</div>
<div class="t" style="left:1011.0px;top:546.17px;font-size:9.7px;line-height:11.15px;color:#252423;font-weight:400;transform:translateX(-50%) scaleX(1.0);">1342857</div>
<div class="t" style="left:1110.25px;top:546.17px;font-size:9.7px;line-height:11.15px;color:#252423;font-weight:400;transform:translateX(-50%) scaleX(1.0);">268571</div>
<div class="t" style="left:629.75px;top:570.67px;font-size:9.7px;line-height:11.15px;color:#252423;font-weight:400;transform:translateX(-50%) scaleX(1.0);">13</div>
<div class="t" style="left:667.5px;top:570.67px;font-size:9.7px;line-height:11.15px;color:#252423;font-weight:400;transform:translateX(-50%) scaleX(0.96);">Feb 2023</div>
<div class="t" style="left:725.5px;top:570.67px;font-size:9.7px;line-height:11.15px;color:#252423;font-weight:400;transform:translateX(-50%) scaleX(1.0);">237</div>
<div class="t" style="left:788.0px;top:570.67px;font-size:9.7px;line-height:11.15px;color:#252423;font-weight:400;transform:translateX(-50%) scaleX(1.0);">874</div>
<div class="t" style="right:305.70000000000005px;transform-origin:right center;top:570.67px;font-size:9.7px;line-height:11.15px;color:#252423;font-weight:400;transform:scaleX(1.0);">9687</div>
<div class="t" style="left:921.0px;top:570.67px;font-size:9.7px;line-height:11.15px;color:#252423;font-weight:400;transform:translateX(-50%) scaleX(1.0);">118571</div>
<div class="t" style="left:1011.0px;top:570.67px;font-size:9.7px;line-height:11.15px;color:#252423;font-weight:400;transform:translateX(-50%) scaleX(1.0);">1371429</div>
<div class="t" style="left:1110.25px;top:570.67px;font-size:9.7px;line-height:11.15px;color:#252423;font-weight:400;transform:translateX(-50%) scaleX(1.0);">274286</div>
<div class="t" style="left:629.75px;top:595.17px;font-size:9.7px;line-height:11.15px;color:#252423;font-weight:400;transform:translateX(-50%) scaleX(1.0);">14</div>
<div class="t" style="left:667.5px;top:595.17px;font-size:9.7px;line-height:11.15px;color:#252423;font-weight:400;transform:translateX(-50%) scaleX(0.96);">Mar 2023</div>
<div class="t" style="left:725.5px;top:595.17px;font-size:9.7px;line-height:11.15px;color:#252423;font-weight:400;transform:translateX(-50%) scaleX(1.0);">240</div>
<div class="t" style="left:788.0px;top:595.17px;font-size:9.7px;line-height:11.15px;color:#252423;font-weight:400;transform:translateX(-50%) scaleX(1.0);">880</div>
<div class="t" style="right:305.70000000000005px;transform-origin:right center;top:595.17px;font-size:9.7px;line-height:11.15px;color:#252423;font-weight:400;transform:scaleX(1.0);">9032</div>
<div class="t" style="left:921.0px;top:595.17px;font-size:9.7px;line-height:11.15px;color:#252423;font-weight:400;transform:translateX(-50%) scaleX(1.0);">120000</div>
<div class="t" style="left:1011.0px;top:595.17px;font-size:9.7px;line-height:11.15px;color:#252423;font-weight:400;transform:translateX(-50%) scaleX(1.0);">1400000</div>
<div class="t" style="left:1110.25px;top:595.17px;font-size:9.7px;line-height:11.15px;color:#252423;font-weight:400;transform:translateX(-50%) scaleX(1.0);">280000</div>
<div class="t" style="left:629.75px;top:619.67px;font-size:9.7px;line-height:11.15px;color:#252423;font-weight:400;transform:translateX(-50%) scaleX(1.0);">15</div>
<div class="t" style="left:667.5px;top:619.67px;font-size:9.7px;line-height:11.15px;color:#252423;font-weight:400;transform:translateX(-50%) scaleX(0.96);">Apr 2023</div>
<div class="t" style="left:725.5px;top:619.67px;font-size:9.7px;line-height:11.15px;color:#252423;font-weight:400;transform:translateX(-50%) scaleX(1.0);">243</div>
<div class="t" style="left:788.0px;top:619.67px;font-size:9.7px;line-height:11.15px;color:#252423;font-weight:400;transform:translateX(-50%) scaleX(1.0);">886</div>
<div class="t" style="right:305.70000000000005px;transform-origin:right center;top:619.67px;font-size:9.7px;line-height:11.15px;color:#252423;font-weight:400;transform:scaleX(1.0);">9237</div>
<div class="t" style="left:921.0px;top:619.67px;font-size:9.7px;line-height:11.15px;color:#252423;font-weight:400;transform:translateX(-50%) scaleX(1.0);">121429</div>
<div class="t" style="left:1011.0px;top:619.67px;font-size:9.7px;line-height:11.15px;color:#252423;font-weight:400;transform:translateX(-50%) scaleX(1.0);">1428571</div>
<div class="t" style="left:1110.25px;top:619.67px;font-size:9.7px;line-height:11.15px;color:#252423;font-weight:400;transform:translateX(-50%) scaleX(1.0);">285714</div>
<div class="a" style="left:619px;top:243.4px;width:545px;height:1.2px;background:#1f78d0"></div>
<div class="a" style="left:1164.2px;top:464px;width:8px;height:180.5px;border-radius:0 0 4px 4px;background:#8ea4b4"></div>
<div class="a" style="left:1164.2px;top:215.5px;width:8px;height:248px;border-radius:4px;background:#445a62;box-shadow:inset 0 0 0 1px rgba(150,172,184,.6)"></div>
<div class="a" style="left:619px;top:645.3px;width:545px;height:8.3px;border-radius:4.2px;background:#8098a8"></div>
<div class="a" style="left:620px;top:646.3px;width:541px;height:6.3px;border-radius:3.2px;background:#3c5258"></div>
</div><div class="a" style="left:1175px;top:0;width:1px;height:665px;background:linear-gradient(180deg,#85a2ac,#8aa8c0 30%,#8aa4b8 60%,#88a6b6)"></div></body></html>
